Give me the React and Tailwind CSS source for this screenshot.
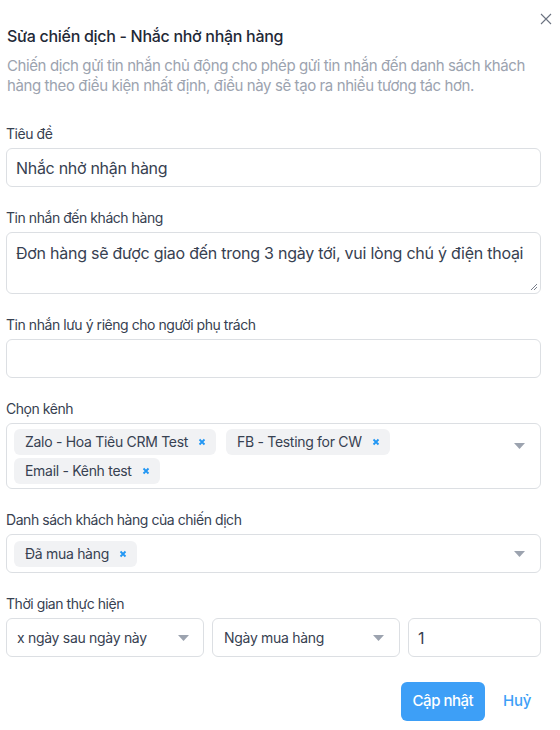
import React from "react";

const Arrow = () => (
  <svg width="11" height="6" viewBox="0 0 11 6" className="shrink-0">
    <path d="M0 0 L11 0 L5.5 6 Z" fill="#9ca3af" />
  </svg>
);

const Chip = ({ label }) => (
  <span className="inline-flex items-center h-[26px] rounded-[6px] bg-[#f1f2f4] pl-[11px] pr-[10px] text-[14px] text-[#374151] tracking-[-0.3px]">
    {label}
    <svg width="8" height="8" viewBox="0 0 8 8" className="ml-[10px]">
      <path d="M1.5 1.5 L6.5 6.5 M6.5 1.5 L1.5 6.5" stroke="#2196f3" strokeWidth="1.8" />
    </svg>
  </span>
);

const Label = ({ children }) => (
  <div className="h-[20px] leading-[20px] mb-[4px] text-[14px] text-[#374151] tracking-[-0.45px]">{children}</div>
);

export default function App() {
  return (
    <div
      className="relative w-[560px] h-[730px] bg-white overflow-hidden"
      style={{ fontFamily: "Inter, 'Noto Sans', sans-serif" }}
    >
      <button className="absolute left-[540px] top-[13px] w-[12px] h-[12px]">
        <svg width="12" height="12" viewBox="0 0 12 12">
          <path d="M1 1 L11 11 M11 1 L1 11" stroke="#6b7280" strokeWidth="1.1" />
        </svg>
      </button>

      <div className="pl-[6px] pr-[19px] pt-[24px]">
        <h1 className="text-[16px] leading-[24px] font-medium text-[#1f2937] tracking-[-0.3px] pl-[1px]">
          Sửa chiến dịch - Nhắc nhở nhận hàng
        </h1>
        <p className="mt-[8px] text-[15px] leading-[20px] text-[#9ca3af] tracking-[-0.4px] pl-[1px]">
          Chiến dịch gửi tin nhắn chủ động cho phép gửi tin nhắn đến danh sách khách hàng theo điều kiện nhất định, điều này sẽ tạo ra nhiều tương tác hơn.
        </p>

        <div className="mt-[28px] flex flex-col gap-[21px]">
          <div>
            <Label>Tiêu đề</Label>
            <div className="h-[39px] rounded-[6px] border border-[#dcdfe3] flex items-center px-[9px] text-[16px] text-[#374151] tracking-[-0.3px]">
              Nhắc nhở nhận hàng
            </div>
          </div>

          <div>
            <Label>Tin nhắn đến khách hàng</Label>
            <div className="relative h-[62px] rounded-[6px] border border-[#dcdfe3] px-[9px] pt-[8px] text-[16px] leading-[24px] text-[#374151] tracking-[-0.25px]">
              Đơn hàng sẽ được giao đến trong 3 ngày tới, vui lòng chú ý điện thoại
              <svg width="8" height="8" viewBox="0 0 8 8" className="absolute right-[2px] bottom-[2px]">
                <path d="M1 7 L7 1 M4 7 L7 4" stroke="#6b7280" strokeWidth="0.9" />
              </svg>
            </div>
          </div>

          <div>
            <Label>Tin nhắn lưu ý riêng cho người phụ trách</Label>
            <div className="h-[39px] rounded-[6px] border border-[#dcdfe3]" />
          </div>

          <div>
            <Label>Chọn kênh</Label>
            <div className="h-[66px] rounded-[6px] border border-[#dcdfe3] flex items-center pl-[7px] pr-[15px]">
              <div className="flex-1 flex flex-wrap gap-x-[10px] gap-y-[3px]">
                <Chip label="Zalo - Hoa Tiêu CRM Test" />
                <Chip label="FB - Testing for CW" />
                <Chip label="Email - Kênh test" />
              </div>
              <div className="self-start mt-[19px]">
                <Arrow />
              </div>
            </div>
          </div>

          <div>
            <Label>Danh sách khách hàng của chiến dịch</Label>
            <div className="h-[39px] rounded-[6px] border border-[#dcdfe3] flex items-center pl-[7px] pr-[15px]">
              <div className="flex-1 flex">
                <Chip label="Đã mua hàng" />
              </div>
              <Arrow />
            </div>
          </div>

          <div>
            <Label>Thời gian thực hiện</Label>
            <div className="flex gap-[8px] h-[39px]">
              <div className="w-[198px] rounded-[6px] border border-[#dcdfe3] flex items-center justify-between pl-[10px] pr-[14px] text-[14px] text-[#374151] tracking-[-0.3px]">
                <span>x ngày sau ngày này</span>
                <Arrow />
              </div>
              <div className="w-[188px] rounded-[6px] border border-[#dcdfe3] flex items-center justify-between pl-[11px] pr-[15px] text-[14px] text-[#374151] tracking-[-0.3px]">
                <span>Ngày mua hàng</span>
                <Arrow />
              </div>
              <div className="flex-1 rounded-[6px] border border-[#dcdfe3] flex items-center px-[9px] text-[16px] text-[#374151]">
                1
              </div>
            </div>
          </div>
        </div>

        <div className="mt-[25px] flex justify-end gap-[8px]">
          <button className="h-[39px] px-[12px] rounded-[6px] bg-[#3d9ff7] text-white text-[15px] font-medium tracking-[-0.5px]">
            Cập nhật
          </button>
          <button className="h-[39px] px-[10px] text-[#3d9ff7] text-[15px] font-medium tracking-[-0.3px]">
            Huỷ
          </button>
        </div>
      </div>
    </div>
  );
}
